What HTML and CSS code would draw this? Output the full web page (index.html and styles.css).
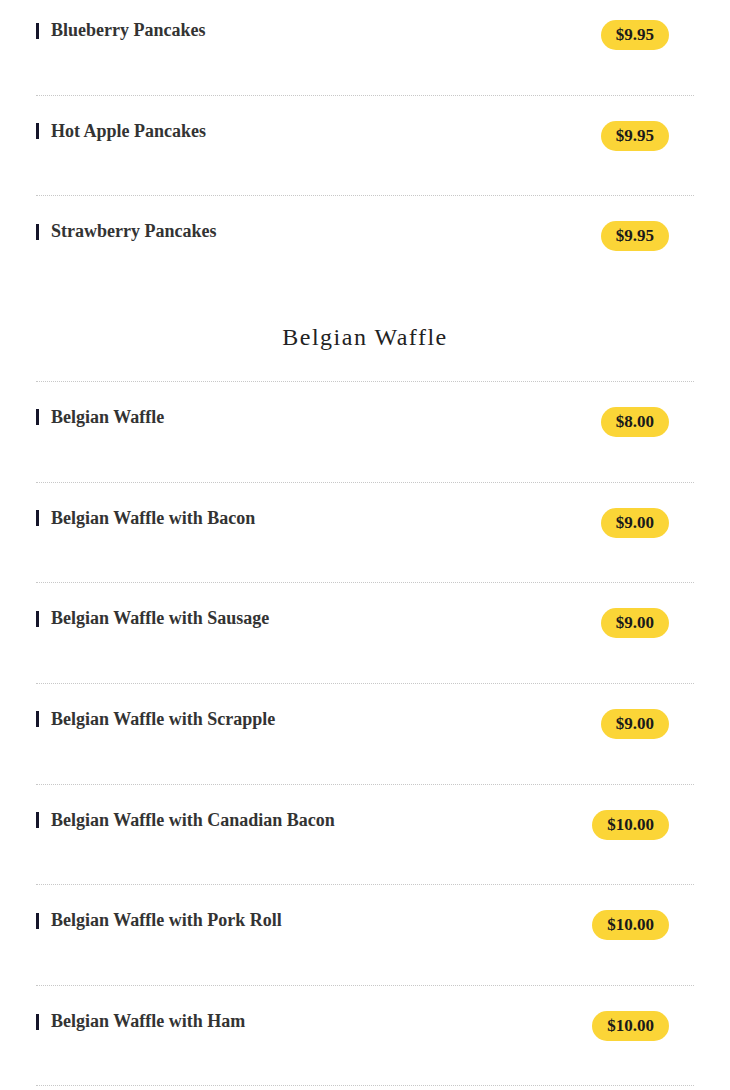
FILE: index.html
```html
<!DOCTYPE html>
<html lang="en">
<head>
  <meta charset="UTF-8" />
  <title>Menu</title>
  <meta name="viewport" content="width=device-width, initial-scale=1" />
  <link rel="stylesheet" href="styles.css">
</head>
<body>

  <div id="menu">
    <div class="section">
      <div class="item">
        <div class="name">Blueberry Pancakes</div>
        <div class="price">$9.95</div>
      </div>
      <div class="item">
        <div class="name">Hot Apple Pancakes</div>
        <div class="price">$9.95</div>
      </div>
      <div class="item">
        <div class="name">Strawberry Pancakes</div>
        <div class="price">$9.95</div>
      </div>
    </div>

    <div class="section">
      <h2>Belgian Waffle</h2>
      <div class="item">
        <div class="name">Belgian Waffle</div>
        <div class="price">$8.00</div>
      </div>
      <div class="item">
        <div class="name">Belgian Waffle with Bacon</div>
        <div class="price">$9.00</div>
      </div>
      <div class="item">
        <div class="name">Belgian Waffle with Sausage</div>
        <div class="price">$9.00</div>
      </div>
      <div class="item">
        <div class="name">Belgian Waffle with Scrapple</div>
        <div class="price">$9.00</div>
      </div>
      <div class="item">
        <div class="name">Belgian Waffle with Canadian Bacon</div>
        <div class="price">$10.00</div>
      </div>
      <div class="item">
        <div class="name">Belgian Waffle with Pork Roll</div>
        <div class="price">$10.00</div>
      </div>
      <div class="item">
        <div class="name">Belgian Waffle with Ham</div>
        <div class="price">$10.00</div>
      </div>
    </div>
  </div>

</body>
</html>
```

FILE: styles.css
```css
html, body {
  margin: 0;
  background: #fff;
  color: #333;
  font-family: 'Liberation Serif', 'Times New Roman', serif;
}
#menu {
  padding: 0 36px;
  margin-top: -6px;
}
h2 {
  margin: 0;
  padding: 27px 0 30px;
  font-size: 24px;
  line-height: 28px;
  font-weight: normal;
  letter-spacing: 1.5px;
  text-align: center;
  color: #222;
}
.item {
  box-sizing: border-box;
  height: 100.7px;
  border-top: 1px dotted #c8c8c8;
  display: flex;
  justify-content: space-between;
  align-items: flex-start;
  padding-right: 25px;
}
.section:first-child .item:last-child {
  height: 100.5px;
}
.section:last-child .item:last-child {
  border-bottom: 1px dotted #c8c8c8;
}
.name {
  display: flex;
  align-items: center;
  gap: 12px;
  margin-top: 22px;
  font-size: 18px;
  line-height: 27px;
  font-weight: bold;
  color: #333;
}
.name::before {
  content: '';
  width: 3px;
  height: 16px;
  background: #15152a;
}
.price {
  margin-top: 25px;
  padding: 0 15px;
  height: 30px;
  line-height: 30px;
  border-radius: 15px;
  background: #fbd537;
  color: #1a1a1a;
  font-size: 17px;
  font-weight: bold;
}
```
